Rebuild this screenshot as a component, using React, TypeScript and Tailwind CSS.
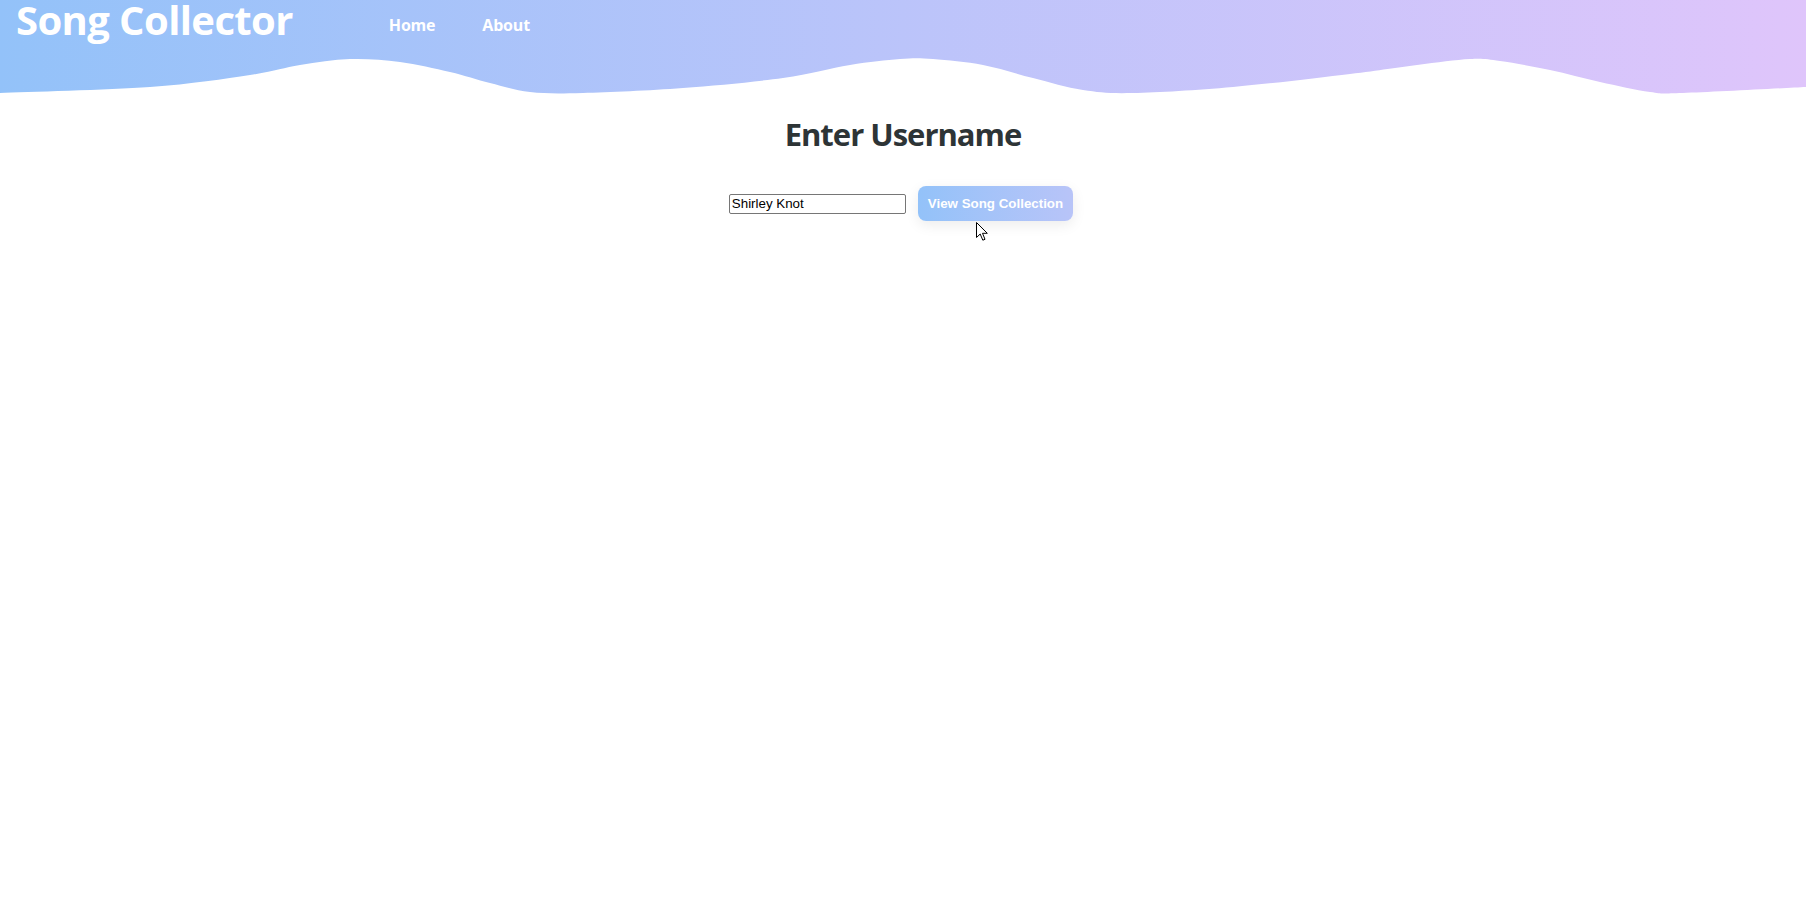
import React from "react";

// sampled along the bottom edge of the header band
const wavePts: [number, number][] = [
  [0, 93], [150, 87], [250, 75], [300, 65], [350, 59], [400, 62], [450, 72], [490, 83], [530, 92], [583, 93],
  [683, 88], [783, 78], [850, 65], [900, 59], [933, 59], [983, 65], [1033, 78], [1083, 90], [1133, 93],
  [1233, 87], [1350, 74], [1417, 65], [1470, 59], [1500, 61], [1550, 70], [1600, 82], [1650, 92], [1683, 93],
  [1806, 87],
];

function wavePath() {
  const p = wavePts;
  let d = `M${p[0][0]},${p[0][1]}`;
  for (let i = 0; i < p.length - 1; i++) {
    const p0 = p[i - 1] ?? p[i];
    const p1 = p[i];
    const p2 = p[i + 1];
    const p3 = p[i + 2] ?? p2;
    const c1x = p1[0] + (p2[0] - p0[0]) / 6;
    const c1y = p1[1] + (p2[1] - p0[1]) / 6;
    const c2x = p2[0] - (p3[0] - p1[0]) / 6;
    const c2y = p2[1] - (p3[1] - p1[1]) / 6;
    d += ` C${c1x.toFixed(1)},${c1y.toFixed(1)} ${c2x.toFixed(1)},${c2y.toFixed(1)} ${p2[0]},${p2[1]}`;
  }
  return d + " L1806,96 L0,96 Z";
}

function Cursor() {
  return (
    <svg width="13" height="20" viewBox="0 0 13 20" className="absolute left-[58px] top-[36px] pointer-events-none">
      <path d="M0.5,0.5 L0.5,15.5 L4.2,12 L6.8,18.2 L9,17.3 L6.5,11.3 L11.3,11.3 Z" fill="#fff" stroke="#000" strokeWidth="1" strokeLinejoin="miter" />
    </svg>
  );
}

export default function App() {
  return (
    <div className="min-h-screen bg-white font-['Segoe_UI','Open_Sans',sans-serif]">
      <header className="relative h-[94px] bg-linear-to-r from-[#93c2f9] to-[#dfc5fb] overflow-hidden">
        <div className="relative z-10 flex items-start pl-[16px]">
          <h1 className="text-[40px] font-bold leading-[40px] text-white tracking-[-0.6px]">Song Collector</h1>
          <nav className="flex gap-[47px] ml-[96px] pt-[13px] text-[16px] leading-[24px] font-bold text-white tracking-[-0.2px]">
            <a href="#">Home</a>
            <a href="#">About</a>
          </nav>
        </div>
        <svg className="absolute left-0 top-0 w-full h-[96px]" viewBox="0 0 1806 96" preserveAspectRatio="none">
          <path d={wavePath()} fill="#fff" />
        </svg>
      </header>

      <main className="flex flex-col items-center">
        <h2 className="mt-[20px] text-[31px] font-bold leading-[40px] text-[#2d3436] tracking-[-1px]">Enter Username</h2>
        <div className="mt-[32px] pr-[4px] flex items-center gap-[12px]">
          <input
            type="text"
            defaultValue="Shirley Knot"
            className="w-[177px] h-[20px] border border-[#767676] rounded-[2px] px-[2px] text-[13.333px] text-black font-['Liberation_Sans',Arial,sans-serif] outline-none"
          />
          <button className="relative h-[35px] px-[10px] rounded-[8px] bg-linear-to-r from-[#93c2f9] to-[#b8c4f8] text-white text-[13.333px] font-bold font-['Liberation_Sans',Arial,sans-serif] shadow-[0_4px_14px_rgba(0,0,0,0.08)]">
            View Song Collection
            <Cursor />
          </button>
        </div>
      </main>
    </div>
  );
}
